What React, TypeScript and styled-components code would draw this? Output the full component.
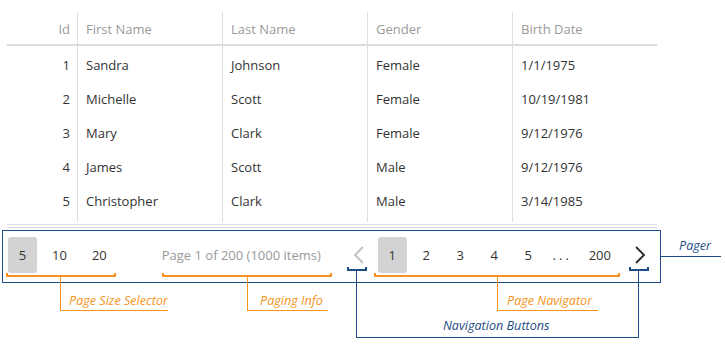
import React from "react";
import styled, { createGlobalStyle } from "styled-components";

const ORANGE = "#f7941d";
const BLUE = "#1e4c86";

const GlobalStyle = createGlobalStyle`
  html, body {
    margin: 0;
    padding: 0;
    background: #fff;
  }
  body {
    font-family: "Open Sans", "Noto Sans", sans-serif;
    font-size: 13px;
    color: #333;
  }
`;

const Canvas = styled.div`
  position: relative;
  width: 725px;
  height: 345px;
  padding-top: 12px;
  box-sizing: border-box;
`;

const Table = styled.div`
  margin-left: 7px;
  width: 650px;
`;

const HeadRow = styled.div`
  display: grid;
  grid-template-columns: 70px repeat(4, 145px);
  height: 32px;
  border-bottom: 2px solid #dddddd;
`;

const Row = styled.div`
  display: grid;
  grid-template-columns: 70px repeat(4, 145px);
  height: 34px;
`;

const Cell = styled.div<{ $num?: boolean; $head?: boolean }>`
  display: flex;
  align-items: center;
  justify-content: ${p => (p.$num ? "flex-end" : "flex-start")};
  padding-left: ${p => (p.$num ? "0" : "8px")};
  padding-right: ${p => (p.$num ? "7px" : "0")};
  padding-top: ${p => (p.$head ? "2px" : "0")};
  border-left: ${p => (p.$num ? "none" : "1px solid #dddddd")};
  color: ${p => (p.$head ? "#9a9a9a" : "#333")};
  white-space: nowrap;
`;

const SepRow = styled.div<{ $h: number }>`
  display: grid;
  grid-template-columns: 70px repeat(4, 145px);
  height: ${p => p.$h}px;
`;

const Sep = styled.div<{ $first?: boolean }>`
  border-left: ${p => (p.$first ? "none" : "1px solid #dddddd")};
`;

const DoubleLine = styled.div`
  margin: 2px 0 0 7px;
  width: 650px;
  height: 2px;
  border-top: 1px solid #dddddd;
  border-bottom: 1px solid #dddddd;
`;

const Pager = styled.div`
  margin: 2px 0 0 2px;
  width: 659px;
  height: 53px;
  border: 1px solid ${BLUE};
  display: flex;
  align-items: flex-start;
  padding: 6px 6px 0 5px;
  box-sizing: border-box;
`;

const Group = styled.div`
  display: flex;
  align-items: center;
  gap: 5px;
`;

const PageBtn = styled.div<{ $active?: boolean }>`
  min-width: 29px;
  height: 36px;
  padding: 0 10px;
  box-sizing: border-box;
  display: flex;
  align-items: center;
  justify-content: center;
  border-radius: 3px;
  background: ${p => (p.$active ? "#d3d3d3" : "transparent")};
  color: #333;
`;

const Info = styled.div`
  margin-left: 45px;
  height: 36px;
  display: flex;
  align-items: center;
  color: #999;
  white-space: nowrap;
`;

const Nav = styled(Group)`
  margin-left: auto;
`;

const Dots = styled.div`
  width: 26px;
  height: 36px;
  display: flex;
  align-items: center;
  justify-content: center;
  letter-spacing: 3px;
  padding-left: 3px;
  box-sizing: border-box;
  color: #333;
`;

const Arrow = styled.div`
  width: 28px;
  height: 36px;
  display: flex;
  align-items: center;
  justify-content: center;
`;

/* callout annotations drawn over the grid */
const Bracket = styled.div<{ $x: number; $y: number; $w: number; $c: string }>`
  position: absolute;
  left: ${p => p.$x}px;
  top: ${p => p.$y}px;
  width: ${p => p.$w}px;
  height: 4px;
  border: 2px solid ${p => p.$c};
  border-top: none;
  box-sizing: border-box;
`;

const VLine = styled.div<{ $x: number; $y: number; $h: number; $c: string }>`
  position: absolute;
  left: ${p => p.$x}px;
  top: ${p => p.$y}px;
  width: 1px;
  height: ${p => p.$h}px;
  background: ${p => p.$c};
`;

const HLine = styled.div<{ $x: number; $y: number; $w: number; $c: string }>`
  position: absolute;
  left: ${p => p.$x}px;
  top: ${p => p.$y}px;
  width: ${p => p.$w}px;
  height: 1px;
  background: ${p => p.$c};
`;

const Label = styled.div<{ $x: number; $y: number; $c: string }>`
  position: absolute;
  left: ${p => p.$x}px;
  top: ${p => p.$y}px;
  font-size: 12.6px;
  font-style: italic;
  color: ${p => p.$c};
  white-space: nowrap;
`;

const people = [
  [1, "Sandra", "Johnson", "Female", "1/1/1975"],
  [2, "Michelle", "Scott", "Female", "10/19/1981"],
  [3, "Mary", "Clark", "Female", "9/12/1976"],
  [4, "James", "Scott", "Male", "9/12/1976"],
  [5, "Christopher", "Clark", "Male", "3/14/1985"],
];

const Chevron = ({ dir, color }: { dir: "l" | "r"; color: string }) => (
  <svg width="14" height="18" viewBox="0 0 14 18">
    <polyline
      points={dir === "l" ? "11,1 3,9 11,17" : "3,1 11,9 3,17"}
      fill="none"
      stroke={color}
      strokeWidth="2"
    />
  </svg>
);

const Separators = ({ h }: { h: number }) => (
  <SepRow $h={h}>
    <Sep $first />
    <Sep />
    <Sep />
    <Sep />
    <Sep />
  </SepRow>
);

export default function App() {
  return (
    <Canvas>
      <GlobalStyle />
      <Table>
        <HeadRow>
          <Cell $num $head>Id</Cell>
          <Cell $head>First Name</Cell>
          <Cell $head>Last Name</Cell>
          <Cell $head>Gender</Cell>
          <Cell $head>Birth Date</Cell>
        </HeadRow>
        <Separators h={2} />
        {people.map(r => (
          <Row key={r[0]}>
            <Cell $num>{r[0]}</Cell>
            <Cell>{r[1]}</Cell>
            <Cell>{r[2]}</Cell>
            <Cell>{r[3]}</Cell>
            <Cell>{r[4]}</Cell>
          </Row>
        ))}
        <Separators h={4} />
      </Table>
      <DoubleLine />
      <Pager>
        <Group>
          <PageBtn $active>5</PageBtn>
          <PageBtn>10</PageBtn>
          <PageBtn>20</PageBtn>
        </Group>
        <Info>Page 1 of 200 (1000 items)</Info>
        <Nav>
          <Arrow>
            <Chevron dir="l" color="#c2c2c2" />
          </Arrow>
          <PageBtn $active>1</PageBtn>
          <PageBtn>2</PageBtn>
          <PageBtn>3</PageBtn>
          <PageBtn>4</PageBtn>
          <PageBtn>5</PageBtn>
          <Dots>...</Dots>
          <PageBtn>200</PageBtn>
          <Arrow>
            <Chevron dir="r" color="#333" />
          </Arrow>
        </Nav>
      </Pager>

      <Bracket $x={6} $y={273} $w={110} $c={ORANGE} />
      <VLine $x={60} $y={276} $h={35} $c={ORANGE} />
      <HLine $x={60} $y={310} $w={108} $c={ORANGE} />
      <Label $x={69} $y={292} $c={ORANGE}>Page Size Selector</Label>

      <Bracket $x={162} $y={273} $w={170} $c={ORANGE} />
      <VLine $x={247} $y={276} $h={35} $c={ORANGE} />
      <HLine $x={247} $y={310} $w={81} $c={ORANGE} />
      <Label $x={260} $y={292} $c={ORANGE}>Paging Info</Label>

      <Bracket $x={374} $y={273} $w={246} $c={ORANGE} />
      <VLine $x={497} $y={276} $h={35} $c={ORANGE} />
      <HLine $x={497} $y={310} $w={101} $c={ORANGE} />
      <Label $x={507} $y={292} $c={ORANGE}>Page Navigator</Label>

      <Bracket $x={347} $y={267} $w={20} $c={BLUE} />
      <Bracket $x={629} $y={267} $w={20} $c={BLUE} />
      <VLine $x={356} $y={270} $h={68} $c={BLUE} />
      <VLine $x={638} $y={270} $h={68} $c={BLUE} />
      <HLine $x={356} $y={337} $w={283} $c={BLUE} />
      <Label $x={443} $y={317} $c={BLUE}>Navigation Buttons</Label>

      <HLine $x={660} $y={256} $w={61} $c={BLUE} />
      <Label $x={679} $y={237} $c={BLUE}>Pager</Label>
    </Canvas>
  );
}
